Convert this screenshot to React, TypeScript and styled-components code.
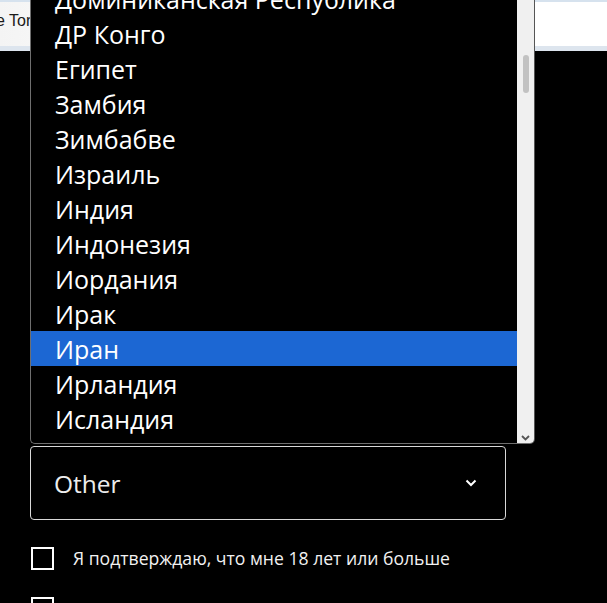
import React from "react";
import styled, { createGlobalStyle } from "styled-components";

const Global = createGlobalStyle`
  html, body { margin: 0; padding: 0; background: #000; }
  body { font-family: "Open Sans", "Noto Sans", sans-serif; overflow: hidden; }
`;

const Page = styled.div`
  position: relative;
  width: 607px;
  height: 603px;
  background: #000;
  overflow: hidden;
`;

const TopBar = styled.div`
  background: linear-gradient(90deg, #f4f4f4 0%, #ffffff 30%, #ffffff 100%);
  border-top: 2px solid #d6e2ee;
  border-bottom: 5px solid #dde5ee;
  display: flex;
  align-items: center;
  font-family: "Liberation Sans", Arial, sans-serif;
  font-size: 16px;
  color: #1a1a1a;
  box-sizing: border-box;
  height: 51px;
`;

const TopText = styled.span`
  margin-left: -4px;
  padding-bottom: 6px;
`;

const Form = styled.div`
  display: flex;
  flex-direction: column;
  padding: 395px 0 0 30px;
  gap: 26px;
`;

const SelectBox = styled.div`
  width: 476px;
  height: 74px;
  box-sizing: border-box;
  border: 1px solid #d8d8d8;
  border-radius: 4px;
  display: flex;
  align-items: center;
  justify-content: space-between;
  padding: 0 28px 0 23px;
  color: #ededed;
  font-size: 24.5px;
`;

const CheckRow = styled.label`
  display: flex;
  align-items: center;
  gap: 19px;
  height: 24px;
  color: #f2f2f2;
  font-size: 17.6px;
  margin-left: 1px;
`;

const Box = styled.span`
  width: 23px;
  height: 23px;
  box-sizing: border-box;
  border: 2px solid #fff;
  flex: none;
`;

const Listbox = styled.div`
  position: absolute;
  left: 30px;
  top: 0;
  width: 505px;
  height: 444px;
  box-sizing: border-box;
  border-left: 1px solid #6f6f6f;
  border-right: 1px solid #555;
  border-bottom: 1px solid #6f6f6f;
  border-radius: 0 0 5px 5px;
  background: #000;
  display: flex;
  overflow: hidden;
`;

const Options = styled.div`
  flex: 1;
  display: flex;
  flex-direction: column;
  margin-top: -19px;
`;

const Option = styled.div<{ $selected?: boolean }>`
  height: 35px;
  flex: none;
  display: flex;
  align-items: center;
  padding-left: 24px;
  font-size: 25px;
  color: #fff;
  background: ${(p) => (p.$selected ? "#1c67d3" : "transparent")};
  white-space: nowrap;
`;

const Scrollbar = styled.div`
  width: 17px;
  flex: none;
  background: #f0f0f0;
  display: flex;
  flex-direction: column;
  align-items: center;
  padding-top: 55px;
  box-sizing: border-box;
  position: relative;
`;

const Thumb = styled.div`
  width: 6px;
  height: 38px;
  border-radius: 3px;
  background: #c2c2c2;
`;

const ArrowDown = styled.svg`
  position: absolute;
  bottom: 2px;
  left: 4px;
`;

const items = [
  "Доминиканская Республика",
  "ДР Конго",
  "Египет",
  "Замбия",
  "Зимбабве",
  "Израиль",
  "Индия",
  "Индонезия",
  "Иордания",
  "Ирак",
  "Иран",
  "Ирландия",
  "Исландия",
  "Испания",
];

export default function App() {
  return (
    <Page>
      <Global />
      <TopBar>
        <TopText>e Tor</TopText>
      </TopBar>
      <Form>
        <SelectBox>
          <span>Other</span>
          <svg width="12" height="8" viewBox="0 0 12 8">
            <path d="M1.5 1.5 L6 6 L10.5 1.5" stroke="#fff" strokeWidth="2" fill="none" />
          </svg>
        </SelectBox>
        <CheckRow>
          <Box />
          <span>Я подтверждаю, что мне 18 лет или больше</span>
        </CheckRow>
        <CheckRow>
          <Box />
          <span></span>
        </CheckRow>
      </Form>
      <Listbox>
        <Options>
          {items.map((t) => (
            <Option key={t} $selected={t === "Иран"}>
              {t}
            </Option>
          ))}
        </Options>
        <Scrollbar>
          <Thumb />
          <ArrowDown width="9" height="6" viewBox="0 0 9 6">
            <path d="M1 1 L4.5 4.5 L8 1" stroke="#555" strokeWidth="1.8" fill="none" />
          </ArrowDown>
        </Scrollbar>
      </Listbox>
    </Page>
  );
}
